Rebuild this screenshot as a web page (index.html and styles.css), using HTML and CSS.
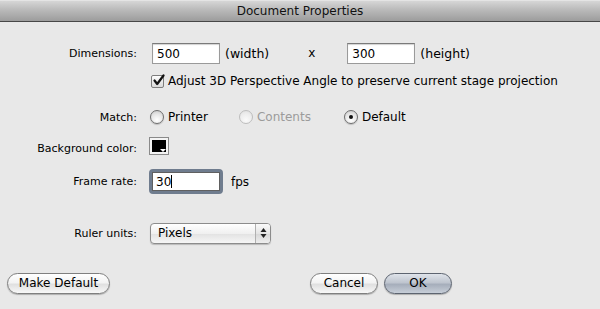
FILE: index.html
```html
<!DOCTYPE html>
<html>
<head>
<meta charset="utf-8">
<link rel="stylesheet" href="styles.css">
</head>
<body>
<div class="dialog">
  <div class="titlebar">Document Properties</div>
  <div class="form">
    <div class="row r-dim">
      <div class="label">Dimensions:</div>
      <div class="ctrl">
        <div class="field w68">500</div>
        <span class="unit">(width)</span>
        <span class="times">x</span>
        <div class="field w68">300</div>
        <span class="unit">(height)</span>
      </div>
    </div>
    <div class="row r-check">
      <div class="label"></div>
      <div class="ctrl">
        <span class="checkbox"><svg width="13" height="13" viewBox="0 0 13 13"><path d="M2.5 6.5 L5.2 10 L11.5 1.5" fill="none" stroke="#111" stroke-width="2.2" stroke-linecap="round" stroke-linejoin="round"/></svg></span>
        <span class="checktext">Adjust 3D Perspective Angle to preserve current stage projection</span>
      </div>
    </div>
    <div class="row r-match">
      <div class="label">Match:</div>
      <div class="ctrl">
        <span class="radio"></span><span class="rtext t-printer">Printer</span>
        <span class="radio disabled"></span><span class="rtext disabled t-contents">Contents</span>
        <span class="radio on"></span><span class="rtext">Default</span>
      </div>
    </div>
    <div class="row r-bg">
      <div class="label lowered">Background color:</div>
      <div class="ctrl">
        <span class="swatch"><span class="swatch-fill"></span><span class="swatch-tri"></span></span>
      </div>
    </div>
    <div class="row r-frame">
      <div class="label">Frame rate:</div>
      <div class="ctrl">
        <div class="focusring"><div class="field w68 focused">30<span class="caret"></span></div></div>
        <span class="fps">fps</span>
      </div>
    </div>
    <div class="row r-ruler">
      <div class="label">Ruler units:</div>
      <div class="ctrl">
        <div class="select"><span class="sel-text">Pixels</span><span class="sel-arrows"><svg width="7" height="12" viewBox="0 0 7 12"><path d="M3.5 1 L6.5 5 L0.5 5 Z M3.5 11 L0.5 7 L6.5 7 Z" fill="#222"/></svg></span></div>
      </div>
    </div>
    <div class="buttons">
      <div class="btn b-make">Make Default</div>
      <div class="right-btns">
        <div class="btn b-cancel">Cancel</div>
        <div class="btn b-ok">OK</div>
      </div>
    </div>
  </div>
</div>
</body>
</html>
```

FILE: styles.css
```css
* { box-sizing: border-box; }
html, body { margin: 0; padding: 0; }
body {
  width: 600px;
  height: 309px;
  background: #e8e8e8;
  font-family: "DejaVu Sans", "Liberation Sans", sans-serif;
  font-size: 11px;
  color: #000;
  overflow: hidden;
}
.titlebar {
  height: 22px;
  background: linear-gradient(#d6d6d6, #bcbcbc 40%, #9c9c9c);
  border-top: 1px solid #e4e4e4;
  border-bottom: 1px solid #474747;
  text-align: center;
  line-height: 20px;
  font-size: 12px;
  color: #111;
}
.form { padding-top: 20px; }
.row { display: flex; align-items: center; }
.label {
  width: 137px;
  text-align: right;
  flex-shrink: 0;
}
.ctrl { display: flex; align-items: center; }
.r-dim { height: 22px; }
.r-dim .ctrl { padding-left: 15px; }
.field {
  height: 21px;
  background: #fff;
  border: 1px solid #9a9a9a;
  border-top-color: #7a7a7a;
  box-shadow: inset 0 1px 1px rgba(0,0,0,0.18);
  padding: 3px 0 0 4px;
  font-size: 12px;
  line-height: 15px;
}
.w68 { width: 68px; }
.unit { margin-left: 5px; font-size: 12.5px; }
.times { margin-left: 39px; margin-right: 32px; font-size: 12px; }
.r-check { height: 16px; margin-top: 9px; }
.r-check .ctrl { padding-left: 14px; }
.checkbox {
  width: 13px; height: 13px;
  border: 1px solid #7d7d7d;
  border-radius: 2px;
  background: linear-gradient(#fdfdfd, #d9d9d9);
  display: inline-flex;
  align-items: center;
  justify-content: center;
  position: relative;
}
.checkbox svg { position: absolute; left: 0; top: -2px; }
.checktext { margin-left: 4px; font-size: 12px; }
.r-match { height: 16px; margin-top: 20px; }
.r-match .ctrl { padding-left: 13px; }
.radio {
  width: 14px; height: 14px;
  border-radius: 50%;
  border: 1px solid #6e6e6e;
  background: radial-gradient(circle at 50% 75%, #ffffff, #e6e6e6 55%, #c4c4c4);
  box-shadow: 0 1px 1px rgba(0,0,0,0.18);
  position: relative;
  flex-shrink: 0;
}
.radio.disabled { border-color: #bdbdbd; background: radial-gradient(circle at 50% 75%, #fafafa, #ececec 60%, #dcdcdc); box-shadow: none; }
.radio.on::after {
  content: "";
  position: absolute;
  left: 4px; top: 4px;
  width: 4px; height: 4px;
  border-radius: 50%;
  background: #111;
}
.rtext { margin-left: 4px; font-size: 12px; }
.rtext.disabled { color: #9b9b9b; }
.t-printer { margin-right: 31px; }
.t-contents { margin-right: 33px; }
.r-bg { height: 18px; margin-top: 12px; }
.r-bg .ctrl { padding-left: 12px; }
.lowered { position: relative; top: 2px; }
.swatch {
  width: 20px; height: 18px;
  border: 1px solid #8a8a8a;
  background: #f4f4f4;
  padding: 2px;
  position: relative;
  display: block;
}
.swatch-fill { display: block; width: 100%; height: 100%; background: #000; }
.swatch-tri {
  position: absolute;
  right: 2px; bottom: 2px;
  width: 0; height: 0;
  border-left: 3px solid transparent;
  border-right: 3px solid transparent;
  border-top: 3px solid #fff;
}
.r-frame { height: 25px; margin-top: 14px; }
.r-frame .ctrl { padding-left: 12px; }
.focusring {
  border: 3px solid #6f7c8e;
  border-radius: 4px;
  background: #fff;
}
.field.focused { width: 68px; height: 19px; border: 1px solid #606060; box-shadow: none; padding-top: 2px; padding-left: 3px; }
.caret { display: inline-block; width: 1px; height: 13px; background: #000; vertical-align: -2px; }
.fps { margin-left: 8px; font-size: 12px; }
.r-ruler { height: 22px; margin-top: 28px; }
.r-ruler .ctrl { padding-left: 13px; }
.select {
  width: 121px; height: 21px;
  border: 1px solid #8c8c8c;
  border-radius: 4px;
  background: linear-gradient(#ffffff, #f0f0f0 50%, #e2e2e2 51%, #f6f6f6);
  box-shadow: 0 1px 1px rgba(0,0,0,0.2);
  display: flex;
  align-items: center;
  overflow: hidden;
}
.sel-text { flex: 1; padding-left: 7px; font-size: 12px; }
.sel-arrows {
  width: 15px; height: 100%;
  border-left: 1px solid #b0b0b0;
  display: flex; align-items: center; justify-content: center;
  background: linear-gradient(#fafafa, #e4e4e4 50%, #d6d6d6 51%, #eeeeee);
}
.buttons {
  display: flex;
  align-items: center;
  height: 22px;
  margin-top: 28px;
  padding-left: 7px;
}
.right-btns { display: flex; margin-left: 200px; gap: 6px; }
.btn {
  height: 21px;
  border: 1px solid #7f7f7f;
  border-radius: 11px;
  background: linear-gradient(#ffffff, #f3f3f3 45%, #e0e0e0 55%, #f8f8f8);
  box-shadow: 0 1px 1px rgba(0,0,0,0.25);
  display: flex; align-items: center; justify-content: center;
  font-size: 12px;
}
.b-make { width: 103px; }
.b-cancel { width: 68px; }
.b-ok {
  width: 68px;
  border-color: #5d6470;
  background: linear-gradient(#dfe3ea, #bfc5cf 45%, #a6aebb 55%, #c7ced8);
}
```
